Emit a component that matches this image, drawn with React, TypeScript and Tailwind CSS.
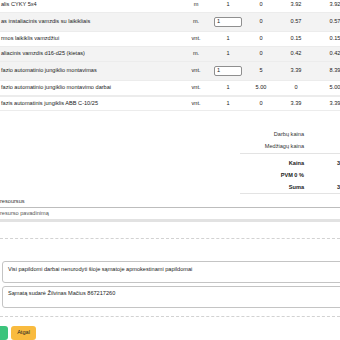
import React from "react";

type Row = {
  name: string;
  unit: string;
  qty: string;
  input?: boolean;
  c4: string;
  c5: string;
  c6: string;
  h: string;
  bg: string;
  extra?: string;
};

const rows: Row[] = [
  { name: "alis CYKY 5x4", unit: "m", qty: "1", c4: "0", c5: "3.92", c6: "3.92", h: "h-[16px] -mt-[3px]", bg: "bg-white" },
  { name: "as instaliacinis vamzdis su laikikliais", unit: "m.", qty: "1", input: true, c4: "0", c5: "0.57", c6: "0.57", h: "h-[19px]", bg: "bg-[#f3f3f3]" },
  { name: "rmos laikiklis vamzdžiui", unit: "vnt.", qty: "1", c4: "0", c5: "0.15", c6: "0.15", h: "h-[15px]", bg: "bg-white" },
  { name: "aliacinis vamzdis d16-d25 (kietas)", unit: "m.", qty: "1", c4: "0", c5: "0.42", c6: "0.42", h: "h-[15px]", bg: "bg-[#f3f3f3]" },
  { name: "fazio automatinio jungiklio montavimas", unit: "vnt.", qty: "1", input: true, c4: "5", c5: "3.39", c6: "8.39", h: "h-[19px]", bg: "bg-[#f3f3f3]" },
  { name: "fazio automatinio jungiklio montavimo darbai", unit: "vnt.", qty: "1", c4: "5.00", c5: "0", c6: "5.00", h: "h-[15px]", bg: "bg-white" },
  { name: "fazis automatinis jungiklis ABB C-10/25", unit: "vnt.", qty: "1", c4: "0", c5: "3.39", c6: "3.39", h: "h-[15px]", bg: "bg-white", extra: "border-t border-[#dcdcdc]" },
];

export default function App() {
  return (
    <div
      className="w-[340px] h-[340px] overflow-hidden bg-white text-[#222] text-[5.6px] leading-none"
      style={{ fontFamily: '"Liberation Sans", Arial, sans-serif' }}
    >
      {/* table */}
      <div className="w-[380px]">
        {rows.map((r, i) => (
          <div key={i} className={`flex items-center ${r.h} ${r.bg} ${r.extra ?? ""} border-b border-[#ececec]`}>
            <div className="w-[180px] shrink-0 pl-[1px] whitespace-nowrap">{r.name}</div>
            <div className="w-[32px] shrink-0 text-center">{r.unit}</div>
            <div className="w-[32px] shrink-0 flex justify-center">
              {r.input ? (
                <div className="w-[28px] h-[10px] border border-[#8f8f8f] rounded-[2px] bg-white flex items-center pl-[2px]">
                  {r.qty}
                </div>
              ) : (
                r.qty
              )}
            </div>
            <div className="w-[34px] shrink-0 text-center">{r.c4}</div>
            <div className="w-[36px] shrink-0 text-center">{r.c5}</div>
            <div className="w-[42px] shrink-0 text-center">{r.c6}</div>
          </div>
        ))}
      </div>

      {/* summary */}
      <div className="ml-[240px] w-[140px] mt-[18px]">
        <div className="flex items-center h-[12px]">
          <div className="w-[64px] text-right text-[#333]">Darbų kaina</div>
        </div>
        <div className="flex items-center h-[13px] border-b border-[#e3e3e3]">
          <div className="w-[64px] text-right text-[#333]">Medžiagų kaina</div>
        </div>
        <div className="flex items-center h-[13px] mt-[3px] font-bold">
          <div className="w-[64px] text-right">Kaina</div>
          <div className="ml-[33px]">3.92</div>
        </div>
        <div className="flex items-center h-[12px] font-bold">
          <div className="w-[64px] text-right">PVM 0 %</div>
        </div>
        <div className="flex items-center h-[12px] font-bold border-b border-[#e3e3e3]">
          <div className="w-[64px] text-right">Suma</div>
          <div className="ml-[33px]">3.92</div>
        </div>
      </div>

      {/* add resource */}
      <div className="mt-[2px] h-[11px] flex items-center text-[#333]">resoursus</div>
      <div className="h-[15px] border-t border-[#bdbdbd] border-b-[3px] border-b-[#e2e2e2] flex items-center text-[#555]">
        resurso pavadinimą
      </div>

      <div className="mt-[16px] border-t border-dashed border-[#d2d2d2]" />

      {/* textareas */}
      <div className="mt-[22px] ml-[2px] w-[360px] flex flex-col gap-[3px]">
        <div className="h-[22px] border border-[#c4c4c4] rounded-[3px] pl-[5px] pt-[5px] text-[#222]">
          Visi papildomi darbai nenurodyti šioje sąmatoje apmokestinami papildomai
        </div>
        <div className="h-[22px] border border-[#c4c4c4] rounded-[3px] pl-[5px] pt-[4px] text-[#222]">
          Sąmatą sudarė Žilvinas Mačius 867217260
        </div>
      </div>

      <div className="mt-[8px] border-t border-dashed border-[#d2d2d2]" />

      {/* buttons */}
      <div className="mt-[9px] flex gap-[3px] -ml-[10px]">
        <div className="h-[14px] w-[18px] rounded-[3px] bg-[#3cc47c]" />
        <div className="h-[14px] w-[25px] rounded-[3px] bg-[#f9bb3f] flex items-center justify-center text-[#222]">
          Atgal
        </div>
      </div>
    </div>
  );
}
